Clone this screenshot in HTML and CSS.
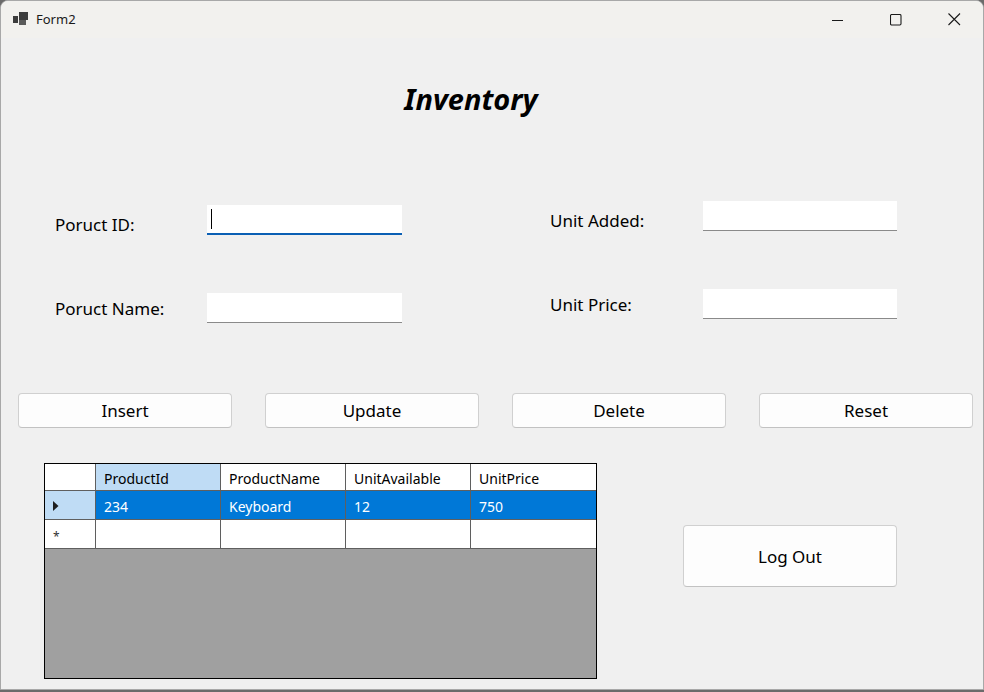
FILE: index.html
```html
<!DOCTYPE html>
<html>
<head>
<meta charset="utf-8">
<link rel="stylesheet" href="styles.css">
</head>
<body>
<div class="window">
  <div class="titlebar">
    <svg class="app-icon" width="16" height="14" viewBox="0 0 16 14">
      <rect x="0" y="4" width="5" height="7" fill="#3c3c3c"/>
      <rect x="6" y="0" width="9" height="8" fill="#3c3c3c"/>
      <rect x="6" y="8" width="7" height="5" fill="#5a5a5a"/>
    </svg>
    <span class="caption">Form2</span>
    <div class="controls">
      <span class="ctl"><svg width="12" height="12" viewBox="0 0 12 12"><line x1="0" y1="6.5" x2="11" y2="6.5" stroke="#1a1a1a" stroke-width="1"/></svg></span>
      <span class="ctl"><svg width="12" height="12" viewBox="0 0 12 12"><rect x="0.5" y="0.5" width="10.5" height="10.5" rx="1.2" fill="none" stroke="#1a1a1a" stroke-width="1.1"/></svg></span>
      <span class="ctl"><svg width="13" height="13" viewBox="0 0 13 13"><path d="M0.5 0.5 L12 12 M12 0.5 L0.5 12" stroke="#1a1a1a" stroke-width="1.1"/></svg></span>
    </div>
  </div>
  <div class="content">
    <h1 class="title">Inventory</h1>
    <div class="form">
      <div class="col col-left">
        <div class="field first"><label class="lbl">Poruct ID:</label><div class="input focused"><span class="caret"></span></div></div>
        <div class="field"><label class="lbl">Poruct Name:</label><div class="input"></div></div>
      </div>
      <div class="col col-right">
        <div class="field first"><label class="lbl">Unit Added:</label><div class="input"></div></div>
        <div class="field"><label class="lbl">Unit Price:</label><div class="input"></div></div>
      </div>
    </div>
    <div class="buttons">
      <button class="btn">Insert</button>
      <button class="btn">Update</button>
      <button class="btn">Delete</button>
      <button class="btn">Reset</button>
    </div>
    <div class="bottom">
      <div class="grid">
        <div class="row head">
          <div class="rh"></div>
          <div class="cell hsel">ProductId</div>
          <div class="cell">ProductName</div>
          <div class="cell">UnitAvailable</div>
          <div class="cell">UnitPrice</div>
        </div>
        <div class="row sel">
          <div class="rh rhsel"><svg width="6" height="10" viewBox="0 0 6 10"><path d="M0 0 L5.5 5 L0 10 Z" fill="#1e1e1e"/></svg></div>
          <div class="cell">234</div>
          <div class="cell">Keyboard</div>
          <div class="cell">12</div>
          <div class="cell">750</div>
        </div>
        <div class="row newrow">
          <div class="rh"><span class="star">*</span></div>
          <div class="cell"></div>
          <div class="cell"></div>
          <div class="cell"></div>
          <div class="cell"></div>
        </div>
      </div>
      <button class="btn logout">Log Out</button>
    </div>
  </div>
</div>
</body>
</html>
```
FILE: styles.css
```css
* { box-sizing: border-box; }
html, body { margin: 0; padding: 0; }
body {
  width: 984px;
  height: 692px;
  background: #6b6b6b;
  font-family: "Noto Sans", "Open Sans", sans-serif;
  overflow: hidden;
}
.window {
  width: 984px;
  height: 690px;
  background: #f0f0f0;
  border: 1px solid #a8a8a8;
  border-radius: 8px 8px 0 0;
  overflow: hidden;
}
.titlebar {
  height: 37px;
  background: #f2f1ee;
  display: flex;
  align-items: center;
  padding-left: 12px;
}
.app-icon { display: block; margin-top: -2px; }
.caption {
  margin-left: 7px;
  font-size: 13px;
  color: #1a1a1a;
  margin-top: -1px;
}
.controls {
  margin-left: auto;
  display: flex;
  height: 100%;
}
.ctl {
  width: 58px;
  height: 100%;
  display: flex;
  align-items: center;
  justify-content: center;
}
.ctl svg { display: block; }
.title {
  margin: 43px 0 0 0;
  padding-right: 42px;
  height: 36px;
  line-height: 36px;
  text-align: center;
  font-size: 29px;
  font-weight: bold;
  font-style: italic;
  color: #000;
}
.form {
  display: flex;
  margin-top: 84px;
  height: 122px;
}
.col { display: flex; flex-direction: column; gap: 58px; }
.col-left { padding-left: 54px; padding-top: 4px; }
.col-right { padding-left: 148px; }
.field { display: flex; align-items: center; height: 30px; }
.lbl {
  font-size: 17px;
  color: #000;
  width: 152px;
  padding-top: 0;
}
.field.first .lbl { padding-top: 8px; }
.col-right .lbl { width: 153px; }
.input {
  width: 195px;
  height: 30px;
  background: #fff;
  border-bottom: 1px solid #8a8a8a;
  position: relative;
}
.col-right .input { width: 194px; }
.input.focused { border-bottom: 2px solid #0a5fb4; }
.caret {
  position: absolute;
  left: 4px;
  top: 4px;
  width: 1px;
  height: 20px;
  background: #000;
}
.buttons {
  display: flex;
  gap: 33px;
  padding-left: 17px;
  margin-top: 70px;
}
.btn {
  width: 214px;
  height: 35px;
  background: #fdfdfd;
  border: 1px solid #d0d0d0;
  border-bottom-color: #c2c2c2;
  border-radius: 4px;
  font-family: "Noto Sans", "Open Sans", sans-serif;
  font-size: 17px;
  color: #000;
  padding: 0;
}
.bottom {
  display: flex;
  margin-top: 35px;
  padding-left: 43px;
}
.grid {
  width: 553px;
  height: 216px;
  background: #a0a0a0;
  border: 1px solid #000;
  font-size: 14px;
}
.row {
  display: flex;
  height: 29px;
  border-bottom: 1px solid #5f5f5f;
  background: #fff;
}
.row.head { height: 27px; }
.rh {
  width: 51px;
  border-right: 1px solid #5f5f5f;
  display: flex;
  align-items: center;
  padding-left: 8px;
  padding-top: 1px;
  flex: none;
}
.rhsel { background: #bfdcf5; }
.star { font-size: 12px; line-height: 1; margin-top: 5px; color: #333; }
.cell {
  width: 125px;
  border-right: 1px solid #5f5f5f;
  padding-left: 8px;
  padding-top: 2px;
  display: flex;
  align-items: center;
  color: #000;
  flex: none;
  white-space: nowrap;
}
.cell:last-child { border-right: none; }
.hsel { background: #bfdcf5; }
.row.sel { background: #0078d7; }
.row.sel .cell { color: #fff; }
.logout {
  width: 214px;
  height: 62px;
  margin-left: 86px;
  margin-top: 62px;
  border-radius: 4px;
  font-size: 17px;
}
```
